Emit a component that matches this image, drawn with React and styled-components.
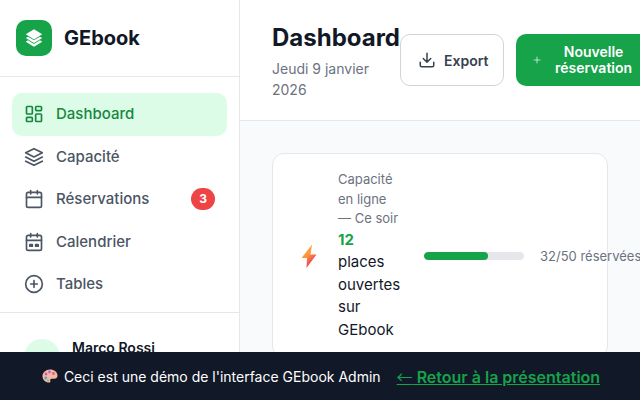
import React from "react";
import styled, { createGlobalStyle } from "styled-components";

const GlobalStyle = createGlobalStyle`
  * { box-sizing: border-box; }
  html, body { margin: 0; height: 100%; overflow: hidden; }
  body { font-family: Inter, "Liberation Sans", sans-serif; background: #fff; color: #111827; }
`;

const Layout = styled.div`
  display: flex;
  width: 640px;
  height: 400px;
  overflow: hidden;
`;

const Sidebar = styled.aside`
  flex: 0 0 240px;
  border-right: 1px solid #e5e7eb;
  background: #fff;
`;

const Brand = styled.div`
  display: flex;
  align-items: center;
  gap: 12px;
  height: 77px;
  padding: 0 16px;
  border-bottom: 1px solid #e5e7eb;
`;

const LogoBox = styled.div`
  display: flex;
  align-items: center;
  justify-content: center;
  width: 36px;
  height: 36px;
  border-radius: 10px;
  background: #16a34a;
  color: #fff;
`;

const BrandName = styled.span`
  font-size: 20px;
  font-weight: 700;
`;

const Nav = styled.nav`
  display: flex;
  flex-direction: column;
  padding: 16px 12px 6.5px;
  border-bottom: 1px solid #e5e7eb;
`;

const NavItem = styled.div`
  display: flex;
  align-items: center;
  gap: 12px;
  padding: 10px 12px;
  border-radius: 10px;
  font-size: 15px;
  line-height: 22.5px;
  font-weight: 500;
  color: ${({ $active }) => ($active ? "#16873f" : "#4b5563")};
  background: ${({ $active }) => ($active ? "#dcfce7" : "transparent")};
`;

const NavLabel = styled.span`
  flex: 1;
`;

const Badge = styled.span`
  display: flex;
  align-items: center;
  justify-content: center;
  width: 24px;
  height: 22px;
  border-radius: 11px;
  background: #ef4444;
  color: #fff;
  font-size: 12px;
  font-weight: 700;
`;

const UserRow = styled.div`
  display: flex;
  gap: 12px;
  padding: 26px 24px;
`;

const Avatar = styled.div`
  display: flex;
  align-items: center;
  justify-content: center;
  width: 36px;
  height: 36px;
  border-radius: 50%;
  background: #dcfce7;
  color: #16a34a;
  font-size: 13px;
  font-weight: 700;
`;

const UserName = styled.div`
  font-size: 14px;
  font-weight: 600;
  line-height: 17px;
`;

const Main = styled.main`
  flex: 1;
  min-width: 0;
  background: #f9fafb;
`;

const Header = styled.header`
  display: flex;
  align-items: center;
  justify-content: space-between;
  height: 121px;
  padding: 0 32px;
  background: #fff;
  border-bottom: 1px solid #e5e7eb;
  width: 400px;
`;

const Heading = styled.div`
  flex: 0 0 128px;
  padding-top: 2px;
`;

const Title = styled.h1`
  margin: 0 0 4px;
  font-size: 24px;
  font-weight: 700;
  line-height: 32px;
  white-space: nowrap;
`;

const DateText = styled.p`
  margin: 0;
  font-size: 14px;
  line-height: 21px;
  color: #6b7280;
`;

const Actions = styled.div`
  display: flex;
  flex: none;
  gap: 12px;
`;

const ExportButton = styled.button`
  display: flex;
  align-items: center;
  gap: 8px;
  width: 104px;
  height: 52px;
  padding: 0 17px;
  border: 1px solid #d1d5db;
  border-radius: 10px;
  background: #fff;
  color: #374151;
  font: 600 14px Inter, sans-serif;
`;

const PrimaryButton = styled.button`
  display: flex;
  align-items: center;
  gap: 14px;
  width: 140px;
  height: 52px;
  padding: 0 25px 0 17px;
  border: none;
  border-radius: 10px;
  background: #16a34a;
  color: #fff;
  font: 600 14px/16px Inter, sans-serif;
  flex: none;
`;

const Content = styled.div`
  padding: 32px;
  width: 400px;
`;

const Card = styled.section`
  display: flex;
  align-items: center;
  gap: 16px;
  width: 336px;
  padding: 16px 24px;
  border: 1px solid #e5e7eb;
  border-radius: 12px;
  background: #fff;
`;

const BoltIcon = styled.svg`
  flex: none;
  width: 25px;
  height: 24px;
`;

const CardText = styled.div`
  flex: 0 0 62px;
  min-width: 0;
`;

const CardLabel = styled.div`
  font-size: 13px;
  line-height: 19.5px;
  color: #6b7280;
`;

const CardValue = styled.div`
  font-size: 15px;
  line-height: 22.5px;
  color: #111827;
`;

const CardCount = styled.strong`
  display: block;
  color: #16a34a;
  font-weight: 700;
`;

const ProgressTrack = styled.div`
  flex: 0 0 100px;
  height: 8px;
  margin-left: 8px;
  border-radius: 4px;
  background: #e5e7eb;
  overflow: hidden;
`;

const ProgressFill = styled.div`
  height: 100%;
  border-radius: 4px;
  background: #16a34a;
`;

const ProgressText = styled.span`
  flex: none;
  font-size: 13px;
  color: #6b7280;
  white-space: nowrap;
`;

const DemoBar = styled.div`
  position: fixed;
  left: 0;
  right: 0;
  bottom: 0;
  display: flex;
  align-items: center;
  justify-content: center;
  gap: 16px;
  height: 48px;
  padding-left: 2px;
  background: #111827;
  color: #fff;
  font-size: 14px;
`;

const DemoNote = styled.span`
  display: flex;
  align-items: center;
  gap: 6px;
`;

const BackLink = styled.a`
  color: #16a34a;
  font-weight: 600;
  font-size: 16px;
  text-decoration: underline;
`;

const BackArrow = styled.span`
  font-family: "Noto Sans CJK SC", sans-serif;
  font-weight: 400;
`;

const Icon = ({ children, size = 20 }) => (
  <svg
    width={size}
    height={size}
    viewBox="0 0 24 24"
    fill="none"
    stroke="currentColor"
    strokeWidth="2"
    strokeLinecap="round"
    strokeLinejoin="round"
    style={{ flex: "none" }}
  >
    {children}
  </svg>
);

const navItems = [
  {
    label: "Dashboard",
    active: true,
    icon: (
      <>
        <rect x="3" y="3" width="7" height="9" rx="1" />
        <rect x="14" y="3" width="7" height="5" rx="1" />
        <rect x="14" y="12" width="7" height="9" rx="1" />
        <rect x="3" y="16" width="7" height="5" rx="1" />
      </>
    ),
  },
  {
    label: "Capacité",
    icon: (
      <>
        <path d="M12 2 2 7l10 5 10-5-10-5z" />
        <path d="m2 12 10 5 10-5" />
        <path d="m2 17 10 5 10-5" />
      </>
    ),
  },
  {
    label: "Réservations",
    badge: 3,
    icon: (
      <>
        <rect x="3" y="4" width="18" height="18" rx="2" />
        <path d="M16 2v4M8 2v4M3 10h18" />
      </>
    ),
  },
  {
    label: "Calendrier",
    icon: (
      <>
        <rect x="3" y="4" width="18" height="18" rx="2" />
        <path d="M16 2v4M8 2v4M3 10h18" />
        <path d="M7 15h3v2H7zM14 15h3v2h-3z" fill="currentColor" />
      </>
    ),
  },
  {
    label: "Tables",
    icon: (
      <>
        <circle cx="12" cy="12" r="10" />
        <path d="M12 8v8M8 12h8" />
      </>
    ),
  },
];

export default function App() {
  return (
    <>
      <GlobalStyle />
      <Layout>
        <Sidebar>
          <Brand>
            <LogoBox>
              <svg width="22" height="22" viewBox="0 0 24 24" fill="currentColor">
                <path d="M12 2.500 3 8l9 5.500L21 8z" />
                <path d="m3 12 2.500-1.500 6.500 4 6.500-4L21 12l-9 5.500z" />
                <path d="m3 16 2.500-1.500 6.500 4 6.500-4L21 16l-9 5.500z" />
              </svg>
            </LogoBox>
            <BrandName>GEbook</BrandName>
          </Brand>
          <Nav>
            {navItems.map((item) => (
              <NavItem key={item.label} $active={item.active}>
                <Icon>{item.icon}</Icon>
                <NavLabel>{item.label}</NavLabel>
                {item.badge && <Badge>{item.badge}</Badge>}
              </NavItem>
            ))}
          </Nav>
          <UserRow>
            <Avatar>MR</Avatar>
            <UserName>Marco Rossi</UserName>
          </UserRow>
        </Sidebar>
        <Main>
          <Header>
            <Heading>
              <Title>Dashboard</Title>
              <DateText>Jeudi 9 janvier 2026</DateText>
            </Heading>
            <Actions>
              <ExportButton>
                <Icon size={18}>
                  <path d="M21 15v4a2 2 0 0 1-2 2H5a2 2 0 0 1-2-2v-4" />
                  <path d="m7 10 5 5 5-5M12 15V3" />
                </Icon>
                Export
              </ExportButton>
              <PrimaryButton>
                <Icon size={8}>
                  <path d="M12 3v18M3 12h18" />
                </Icon>
                <span>Nouvelle réservation</span>
              </PrimaryButton>
            </Actions>
          </Header>
          <Content>
            <Card>
              <BoltIcon viewBox="0 0 25 24">
                <defs>
                  <linearGradient id="bolt" x1="0.25" y1="0.1" x2="0.7" y2="0.9">
                    <stop offset="0" stopColor="#fdb44a" />
                    <stop offset="0.45" stopColor="#fb923c" />
                    <stop offset="0.8" stopColor="#ef5350" />
                  </linearGradient>
                </defs>
                <path d="M15 .5 4.500 14H10L9.500 24 19.500 10.500h-6z" fill="url(#bolt)" />
              </BoltIcon>
              <CardText>
                <CardLabel>Capacité en ligne — Ce soir</CardLabel>
                <CardValue>
                  <CardCount>12</CardCount>
                  places ouvertes sur GEbook
                </CardValue>
              </CardText>
              <ProgressTrack>
                <ProgressFill style={{ width: "64%" }} />
              </ProgressTrack>
              <ProgressText>32/50 réservées</ProgressText>
            </Card>
          </Content>
        </Main>
      </Layout>
      <DemoBar>
        <DemoNote>
          <svg width="16" height="16" viewBox="0 0 16 16">
            <path
              d="M8 1.500C3.800 1.500 .5 4.500.5 8.200c0 3.500 3 6.300 6.500 6.300 1.500 0 1.700-.9 1.300-1.800-.5-1 .2-2 1.300-2h2.600c1.900 0 3.300-1.200 3.300-3C15.500 4 12.200 1.500 8 1.500z"
              fill="#f5b8a4"
            />
            <circle cx="4" cy="6" r="1.400" fill="#e0529c" />
            <circle cx="7.500" cy="4" r="1.400" fill="#b06bd6" />
            <circle cx="11.500" cy="5.500" r="1.400" fill="#e85d75" />
            <circle cx="3.800" cy="10" r="1.400" fill="#4aa8e0" />
            <circle cx="6" cy="12.500" r="1" fill="#5cc48a" />
          </svg>
          Ceci est une démo de l'interface GEbook Admin
        </DemoNote>
        <BackLink href="#">
          <BackArrow>←</BackArrow> Retour à la présentation
        </BackLink>
      </DemoBar>
    </>
  );
}
